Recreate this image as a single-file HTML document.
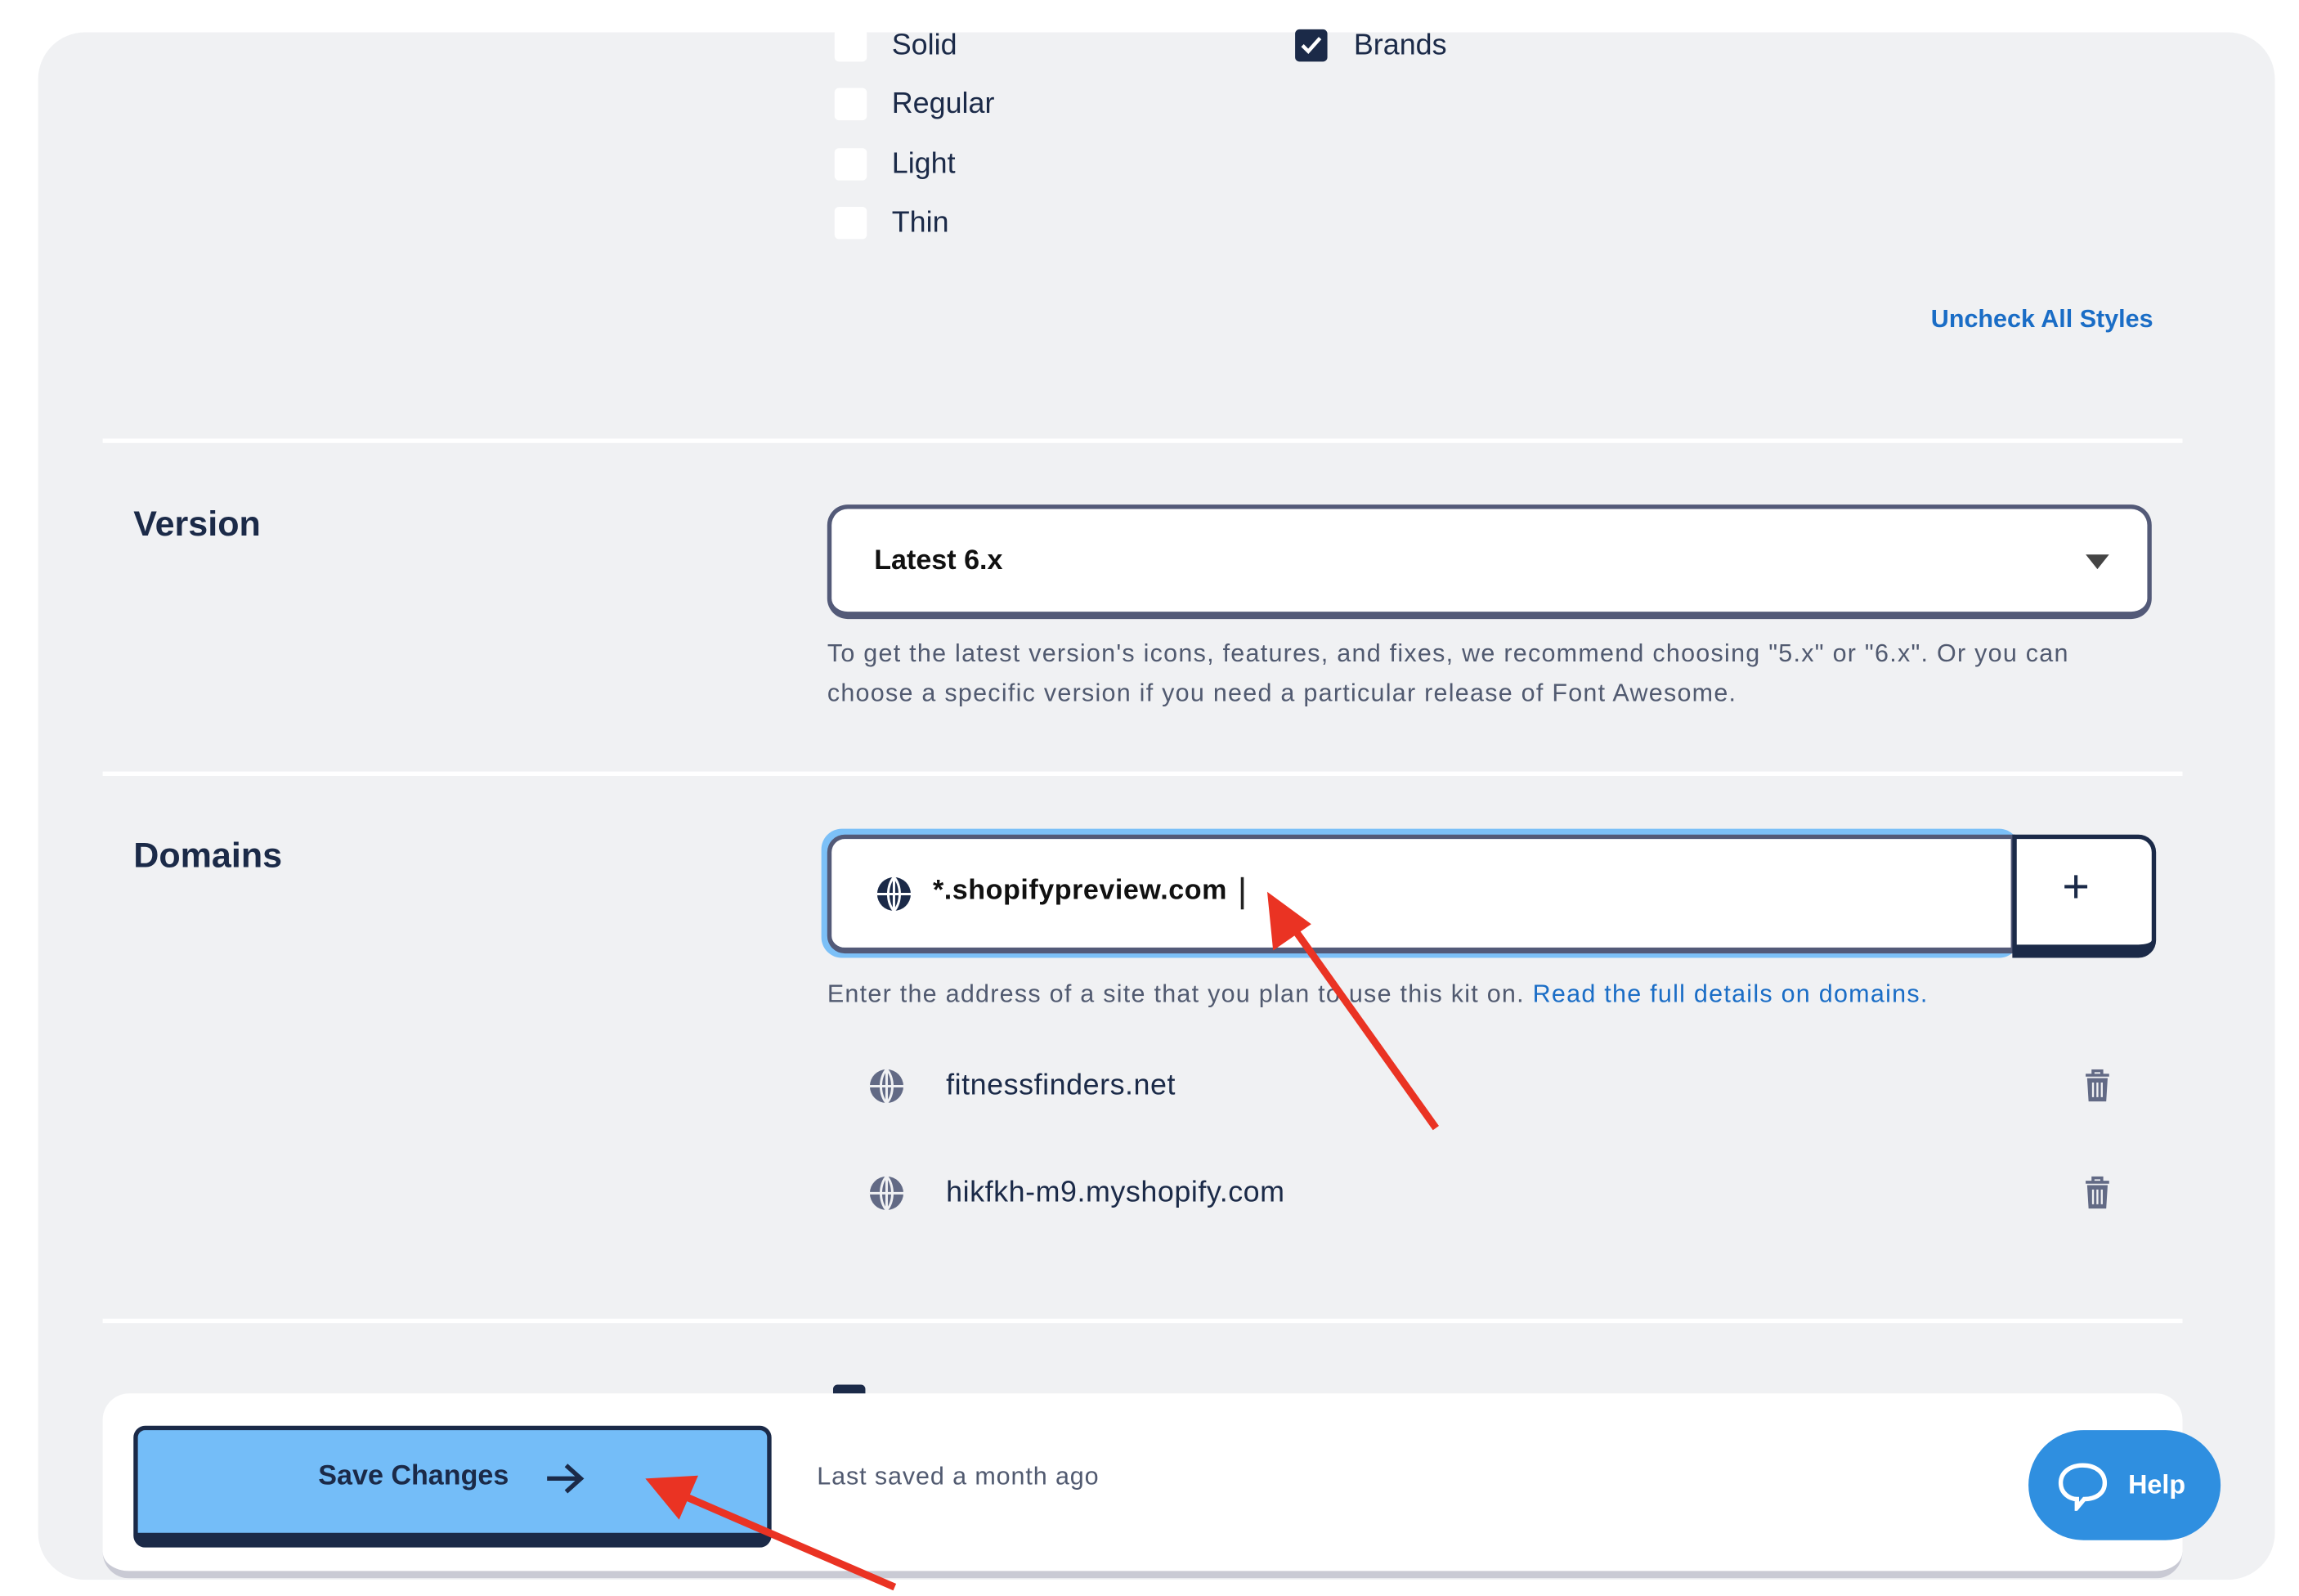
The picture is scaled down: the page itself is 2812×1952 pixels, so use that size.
<!DOCTYPE html>
<html><head><meta charset="utf-8"><style>
html,body{margin:0;padding:0;background:#fff;width:2812px;height:1952px;overflow:hidden}
#w{position:absolute;left:0;top:0;width:1563px;height:1085px;transform:scale(1.794);transform-origin:0 0;font-family:"Liberation Sans",sans-serif;color:#1b2a48}
.a{position:absolute}
.panel{left:26px;top:22px;width:1525px;height:1055px;background:#f0f1f3;border-radius:32px}
.cb{width:22px;height:22px;background:#fff;border-radius:3px}
.lbl{font-size:20px;line-height:24px}
.hr{left:70px;width:1418px;height:3px;background:#fff}
.h{font-size:24px;font-weight:bold;left:91px}
.help{font-size:17px;color:#515a70;line-height:27px;letter-spacing:0.7px;white-space:nowrap}
.dom{font-size:20px;left:645px;letter-spacing:0.3px}
</style></head><body><div id="w">
<div class="a panel"></div>
<div class="a cb" style="left:569px;top:20px"></div><div class="a lbl" style="left:608px;top:19px">Solid</div>
<div class="a cb" style="left:569px;top:60px"></div><div class="a lbl" style="left:608px;top:59px">Regular</div>
<div class="a cb" style="left:569px;top:101px"></div><div class="a lbl" style="left:608px;top:100px">Light</div>
<div class="a cb" style="left:569px;top:141px"></div><div class="a lbl" style="left:608px;top:140px">Thin</div>
<div class="a cb" style="left:883px;top:20px;background:#1b2a48"><svg width="22" height="22"><path d="M5 11l4 4 8-9" stroke="#fff" stroke-width="2.5" fill="none"/></svg></div>
<div class="a lbl" style="left:923px;top:19px">Brands</div>
<div class="a" style="right:95px;top:208px;font-size:17px;font-weight:bold;color:#1a6dc6">Uncheck All Styles</div>
<div class="a hr" style="top:299px"></div>
<div class="a h" style="top:344px">Version</div>
<div class="a" style="left:564px;top:344px;width:897px;height:70px;background:#fff;border:3px solid #535a78;border-bottom-width:5px;border-radius:14px"></div>
<div class="a" style="left:596px;top:372px;font-size:19px;font-weight:bold;color:#111">Latest 6.x</div>
<svg class="a" style="left:1422px;top:378px" width="16" height="10"><path d="M0 0h16L8 10z" fill="#444"/></svg>
<div class="a help" style="left:564px;top:432px">To get the latest version's icons, features, and fixes, we recommend choosing "5.x" or "6.x". Or you can<br>choose a specific version if you need a particular release of Font Awesome.</div>
<div class="a hr" style="top:526px"></div>
<div class="a h" style="top:570px">Domains</div>
<div class="a" style="left:560px;top:565px;width:817px;height:88px;background:#7cc0f7;border-radius:14px"></div>
<div class="a" style="left:564px;top:569px;width:804px;height:74px;background:#fff;border:3px solid #535a78;border-bottom-width:4px;border-radius:12px 0 0 12px"></div>
<div class="a" style="left:1372px;top:569px;width:92px;height:72px;background:#fff;border:3px solid #1b2a48;border-bottom:9px solid #1b2a48;border-radius:0 12px 12px 0"></div>
<div class="a" style="left:1406px;top:586px;font-size:32px;color:#1b2a48">+</div>
<svg class="a" style="left:597px;top:597px" width="25" height="25" viewBox="0 0 24 24"><circle cx="12" cy="12" r="11" fill="#1b2a48"/><path d="M1 12h22M12 1v22M12 1c-5 5-5 17 0 22M12 1c5 5 5 17 0 22" stroke="#fff" stroke-width="1.6" fill="none"/></svg>
<div class="a" style="left:636px;top:597px;font-size:19px;font-weight:bold;color:#111;letter-spacing:0.3px">*.shopifypreview.com</div>
<div class="a" style="left:846px;top:598px;width:2px;height:22px;background:#222"></div>
<div class="a help" style="left:564px;top:664px">Enter the address of a site that you plan to use this kit on. <span style="color:#1a6dc6">Read the full details on domains.</span></div>
<svg class="a" style="left:592px;top:728px" width="25" height="25" viewBox="0 0 24 24"><circle cx="12" cy="12" r="11" fill="#626a85"/><path d="M1 12h22M12 1v22M12 1c-5 5-5 17 0 22M12 1c5 5 5 17 0 22" stroke="#f0f1f3" stroke-width="1.6" fill="none"/></svg>
<div class="a dom" style="top:729px">fitnessfinders.net</div>
<svg class="a" style="left:592px;top:801px" width="25" height="25" viewBox="0 0 24 24"><circle cx="12" cy="12" r="11" fill="#626a85"/><path d="M1 12h22M12 1v22M12 1c-5 5-5 17 0 22M12 1c5 5 5 17 0 22" stroke="#f0f1f3" stroke-width="1.6" fill="none"/></svg>
<div class="a dom" style="top:802px">hikfkh-m9.myshopify.com</div>
<svg class="a" style="left:1421px;top:729px" width="18" height="22" viewBox="0 0 18 22"><path d="M1 4h16M6 4V1h6v3" stroke="#626a85" stroke-width="2" fill="none"/><path d="M2 6h14l-1 16H3z" fill="#626a85"/><path d="M6 9v10M9 9v10M12 9v10" stroke="#f0f1f3" stroke-width="1.3"/></svg>
<svg class="a" style="left:1421px;top:802px" width="18" height="22" viewBox="0 0 18 22"><path d="M1 4h16M6 4V1h6v3" stroke="#626a85" stroke-width="2" fill="none"/><path d="M2 6h14l-1 16H3z" fill="#626a85"/><path d="M6 9v10M9 9v10M12 9v10" stroke="#f0f1f3" stroke-width="1.3"/></svg>
<div class="a hr" style="top:899px"></div>
<div class="a" style="left:568px;top:944px;width:22px;height:10px;background:#1b2a48;border-radius:3px"></div>
<div class="a" style="left:70px;top:950px;width:1418px;height:121px;background:#fff;border-radius:18px;border-bottom:5px solid #c9cad4"></div>
<div class="a" style="left:91px;top:972px;width:429px;height:70px;background:#74bdf8;border:3px solid #1b2a48;border-bottom-width:10px;border-radius:8px"></div>
<div class="a" style="left:217px;top:996px;font-size:19px;font-weight:bold">Save Changes</div>
<svg class="a" style="left:371px;top:996px" width="28" height="24"><path d="M2 12h23M15 3l10 9-10 9" stroke="#1b2a48" stroke-width="3" fill="none"/></svg>
<div class="a" style="left:557px;top:997px;font-size:17px;color:#515a70;letter-spacing:0.5px">Last saved a month ago</div>
<div class="a" style="left:1383px;top:975px;width:131px;height:75px;background:#2f8fe0;border-radius:38px"></div>
<svg class="a" style="left:1402px;top:996px" width="36" height="34"><path d="M18 3C9 3 3 8 3 15s6 11 11 11l0 6 5-6c8 0 14-4 14-11S27 3 18 3z" stroke="#fff" stroke-width="3" fill="none"/></svg>
<div class="a" style="left:1451px;top:1002px;font-size:18px;font-weight:bold;color:#fff">Help</div>
<svg class="a" style="left:0;top:0" width="1563" height="1085"><g stroke="#ea3323" stroke-width="5" fill="#ea3323"><line x1="979" y1="769" x2="880" y2="630"/><line x1="610" y1="1082" x2="462" y2="1018"/></g><path d="M864 608l30 22-26 18z" fill="#ea3323"/><path d="M440 1008l36-2-13 30z" fill="#ea3323"/></svg>
</div></body></html>
